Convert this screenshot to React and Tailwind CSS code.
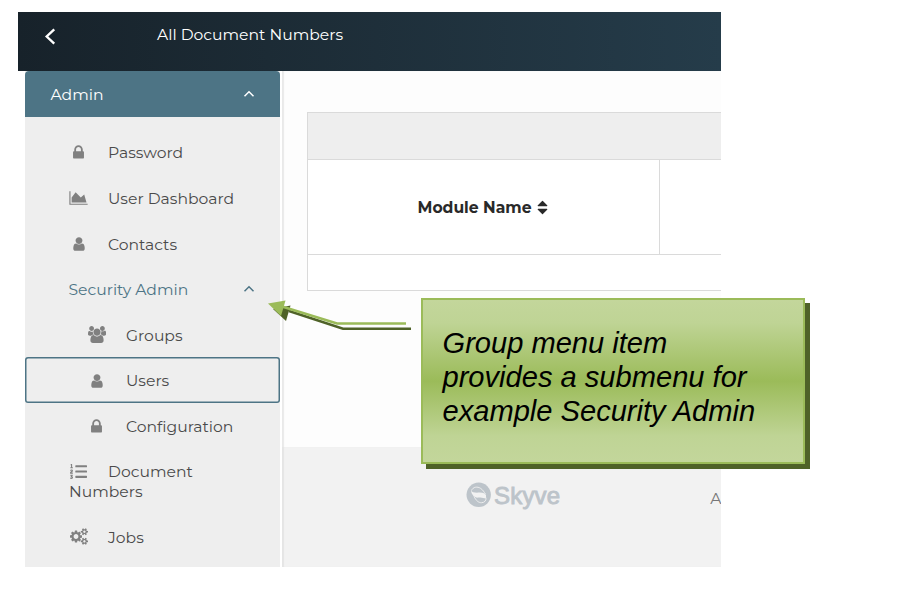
import React from "react";
import { FaListOl } from "react-icons/fa";

const LOCK =
  "M640 768h512v-192q0-106-75-181t-181-75-181 75-75 181v192zm832 96v576q0 40-28 68t-68 28h-960q-40 0-68-28t-28-68v-576q0-40 28-68t68-28h32v-192q0-184 132-316t316-132 316 132 132 316v192h32q40 0 68 28t28 68z";
const USER =
  "M1536 1399q0 109-62.5 187t-150.5 78h-854q-88 0-150.5-78t-62.5-187q0-85 8.5-160.5t31.5-152 58.5-131 94-89 134.5-34.5q131 128 313 128t313-128q76 0 134.5 34.5t94 89 58.5 131 31.5 152 8.5 160.5zm-256-887q0 159-112.5 271.5t-271.5 112.5-271.5-112.5-112.5-271.5 112.5-271.5 271.5-112.5 271.5 112.5 112.5 271.5z";
const AREA = "M2048 1536v128h-2048v-1536h128v1408h1920zm-384-1024l256 896h-1664v-576l448-576 576 576z";
const USERS =
  "M593 896q-162 5-265 128h-134q-82 0-138-40.5t-56-118.5q0-353 124-353 6 0 43.5 21t97.5 42.5 119 21.5q67 0 133-23-5 37-5 66 0 159 93 293zm1071 637q0 120-73 189.5t-194 69.5h-874q-121 0-194-69.5t-73-189.5q0-53 3.5-103.5t14-109 26.5-108.5 43-97.5 62-81 85.5-53.5 111.5-20q10 0 43 21.5t73 48 107 48 135 21.5 135-21.5 107-48 73-48 43-21.5q61 0 111.5 20t85.5 53.5 62 81 43 97.5 26.5 108.5 14 109 3.5 103.5zm-1024-1277q0 106-75 181t-181 75-181-75-75-181 75-181 181-75 181 75 75 181zm704 384q0 159-112.5 271.5t-271.5 112.5-271.5-112.5-112.5-271.5 112.5-271.5 271.5-112.5 271.5 112.5 112.5 271.5zm576 225q0 78-56 118.5t-138 40.5h-134q-103-123-265-128 93-134 93-293 0-29-5-66 66 23 133 23 59 0 119-21.5t97.5-42.5 43.5-21q124 0 124 353zm-128-609q0 106-75 181t-181 75-181-75-75-181 75-181 181-75 181 75 75 181z";
const COG_SMALL =
  "v140q0 16-149 31-12 27-30 52 51 113 51 138 0 4-4 7-122 71-124 71-8 0-46-47t-52-68q-20 2-30 2t-30-2q-14 21-52 68t-46 47q-2 0-124-71-4-3-4-7 0-25 51-138-18-25-30-52-149-15-149-31v-140q0-16 149-31 13-29 30-52-51-113-51-138 0-4 4-7 4-2 35-20t59-34 30-16q8 0 46 46.5t52 67.5q20-2 30-2t30 2q51-71 92-112l6-2q4 0 124 70 4 3 4 7 0 25-51 138 17 23 30 52 149 15 149 31z";
const COGS =
  "M896 896q0-106-75-181t-181-75-181 75-75 181 75 181 181 75 181-75 75-181zm768 512q0-52-38-90t-90-38-90 38-38 90q0 53 37.5 90.5t90.5 37.5 90.5-37.5 37.5-90.5zm0-1024q0-52-38-90t-90-38-90 38-38 90q0 53 37.5 90.5t90.5 37.5 90.5-37.5 37.5-90.5zm-384 421v185q0 10-7 19.5t-16 10.5l-155 24q-11 35-32 76 34 48 90 115 7 11 7 20 0 12-7 19-23 30-82.5 89.5t-78.5 59.5q-11 0-21-7l-115-90q-37 19-77 31-11 108-23 155-7 24-30 24h-186q-11 0-20-7.5t-10-17.5l-23-153q-34-10-75-31l-118 89q-7 7-20 7-11 0-21-8-144-133-144-160 0-9 7-19 10-14 41-53t47-61q-23-44-35-82l-152-24q-10-1-17-9.5t-7-19.5v-185q0-10 7-19.5t16-10.5l155-24q11-35 32-76-34-48-90-115-7-11-7-20 0-12 7-20 22-30 82-89t79-59q11 0 21 7l115 90q34-18 77-32 11-108 23-154 7-24 30-24h186q11 0 20 7.5t10 17.5l23 153q34 10 75 31l118-89q8-7 20-7 11 0 21 8 144 133 144 160 0 8-7 19-12 16-42 54t-45 60q23 48 34 82l152 23q10 2 17 10.5t7 19.5z" +
  "M1920 1338" + COG_SMALL + "M1920 314" + COG_SMALL;
const SORT =
  "M1408 1088q0 26-19 45l-448 448q-19 19-45 19t-45-19l-448-448q-19-19-19-45t19-45 45-19h896q26 0 45 19t19 45zm0-384q0 26-19 45t-45 19h-896q-26 0-45-19t-19-45 19-45l448-448q19-19 45-19t45 19l448 448q19 19 19 45z";

function Glyph({ d, w = 1792, className }) {
  return (
    <svg viewBox={`0 0 ${w} 1792`} className={`shrink-0 ${className}`} fill="currentColor">
      <path d={d} />
    </svg>
  );
}

function Chevron() {
  return (
    <svg viewBox="0 0 12 8" className="h-2 w-3" fill="none" stroke="currentColor" strokeWidth="1.5">
      <path d="M1.5 6.2 6 1.8l4.5 4.4" />
    </svg>
  );
}

function Item({ icon, label, nested, selected }) {
  return (
    <div
      className={`flex h-[45.6px] shrink-0 items-center ${nested ? "pl-[62px]" : "pl-[44px]"} ${
        selected ? "rounded-[3px] shadow-[inset_0_0_0_1.5px_#4d7485]" : ""
      }`}
    >
      <span className="flex w-[19px] shrink-0 justify-center text-[#808080]">{icon}</span>
      <span className="ml-5 pt-[2.4px]">{label}</span>
    </div>
  );
}

const lock = <Glyph d={LOCK} className="mt-px size-[17px]" />;
const user = <Glyph d={USER} className="mt-px size-[16px]" />;

export default function App() {
  return (
    <div className="relative h-[593px] w-[897px] overflow-hidden bg-white pl-[18px] pt-3 font-['Montserrat','Inter',sans-serif] text-[15.6px] leading-6 text-[#4a4a4a]">
      <div className="flex h-[555px] w-[703px] flex-col overflow-hidden">
        <header className="flex h-[59px] shrink-0 items-start bg-linear-to-r from-[#17222a] to-[#253c4a] text-white">
          <svg viewBox="0 0 12 18" className="ml-[26px] mt-4 h-[17px] w-3" fill="none" stroke="currentColor" strokeWidth="2.5">
            <path d="M10.5 1.5 2.5 9l8 7.5" />
          </svg>
          <span className="ml-[101px] mt-[10.5px]">All Document Numbers</span>
        </header>

        <div className="flex min-h-0 flex-1">
          <aside className="ml-[7px] flex w-[255px] shrink-0 flex-col bg-[#eee]">
            <div className="flex h-[46px] shrink-0 items-center justify-between rounded-t-[4px] bg-[#4d7485] pl-[25.5px] pr-[25px] text-white">
              <span className="pt-[2px]">Admin</span>
              <Chevron />
            </div>
            <nav className="flex flex-col pt-[12.5px]">
              <Item icon={lock} label="Password" />
              <Item icon={<Glyph d={AREA} w={2048} className="h-4 w-[19px]" />} label="User Dashboard" />
              <Item icon={user} label="Contacts" />
              <div className="flex h-[45.6px] items-center justify-between pl-[43.5px] pr-[25px] text-[#4d7485]">
                <span className="pt-[2px]">Security Admin</span>
                <Chevron />
              </div>
              <Item nested icon={<Glyph d={USERS} w={1920} className="h-[17px] w-[18px]" />} label="Groups" />
              <Item nested selected icon={user} label="Users" />
              <Item nested icon={lock} label="Configuration" />
              <div className="flex h-[65px] flex-col pl-[44px] pt-[13.5px] leading-[19.5px]">
                <div className="flex items-center">
                  <span className="flex w-[19px] shrink-0 justify-center text-[#808080]">
                    <FaListOl className="size-[17px]" />
                  </span>
                  <span className="ml-5">Document</span>
                </div>
                <span>Numbers</span>
              </div>
              <Item icon={<Glyph d={COGS} w={1920} className="mt-px h-[17px] w-[18px]" />} label="Jobs" />
            </nav>
          </aside>

          <div className="w-[2px] shrink-0 bg-white" />
          <main className="flex min-w-0 flex-1 flex-col bg-[#fdfdfd] shadow-[inset_2px_0_1px_#e9e9e9]">
            <section className="ml-[25px] mt-[41px] flex h-[179px] shrink-0 flex-col border border-r-0 border-[#dadada] bg-white">
              <div className="h-[47px] shrink-0 border-b border-[#dadada] bg-[#eee]" />
              <div className="flex h-[95px] shrink-0 border-b border-[#dadada]">
                <div className="flex w-[352px] items-center border-r border-[#dadada] pl-[109.5px] font-bold text-[#292929]">
                  <span className="whitespace-nowrap pt-[2px]">Module Name</span>
                  <Glyph d={SORT} className="ml-[2px] size-[17px]" />
                </div>
              </div>
            </section>
            <footer className="mt-auto flex h-[120px] shrink-0 items-start bg-[#f2f2f2] pt-[35px] shadow-[inset_2px_0_1px_#e5e5e5]">
              <svg viewBox="0 0 26 26" className="ml-[183.5px] size-[26px] shrink-0">
                <circle cx="12.7" cy="12.8" r="12.2" fill="#bdc4ca" />
                <path d="M5.5 8.500C7 4.800 11.500 4.300 14.500 6.300S17.800 10 19.500 12" fill="none" stroke="#f2f2f2" strokeWidth="0.9" />
                <path d="M5 8.500C6 10.500 9 10.800 13 10.600S18.800 11.300 20 13V16C17.500 16.800 15 15.200 12 15.600S5.500 13 5 8.500Z" fill="#f2f2f2" />
                <path d="M8 14.500c2 4 4.500 6.300 7.500 6.200s4.800-2 4.500-5" fill="none" stroke="#f2f2f2" strokeWidth="0.9" />
              </svg>
              <span className="ml-[2.5px] shrink-0 font-['Liberation_Sans',sans-serif] text-[24px] leading-[28px] tracking-[0.2px] text-[#bdc4ca] [-webkit-text-stroke:0.9px_#bdc4ca]">
                Skyve
              </span>
              <span className="ml-[150px] mt-[5px] shrink-0 text-[#777]">A</span>
            </footer>
          </main>
        </div>
      </div>

      <svg viewBox="0 0 150 40" className="absolute left-[265px] top-[295px] h-10 w-[150px]">
        <path d="M24 16 78 33.8h68" fill="none" stroke="#4f6228" strokeWidth="2.5" />
        <path d="M8 14 25.5 10.5 21 26Z" fill="#4f6228" />
        <path d="M17 11.5 72 28.5h69" fill="none" stroke="#9bbb59" strokeWidth="2.5" />
        <path d="M3 8.5 20.5 5.5 16 21Z" fill="#9bbb59" />
      </svg>
      <div className="absolute left-[420.5px] top-[298px] h-[166px] w-[384px] border-[2.5px] border-[#9bbb59] bg-[linear-gradient(to_bottom,#c3d69b_0%,#bfd495_14%,#9bbb59_50%,#bfd495_84%,#c3d69b_100%)] pl-5 pt-[26px] font-['Liberation_Sans',Arial,sans-serif] text-[29.1px] italic leading-[34px] text-black shadow-[5px_5px_0_#4f6228]">
        <p>Group menu item</p>
        <p>provides a submenu for</p>
        <p>example Security Admin</p>
      </div>
    </div>
  );
}
